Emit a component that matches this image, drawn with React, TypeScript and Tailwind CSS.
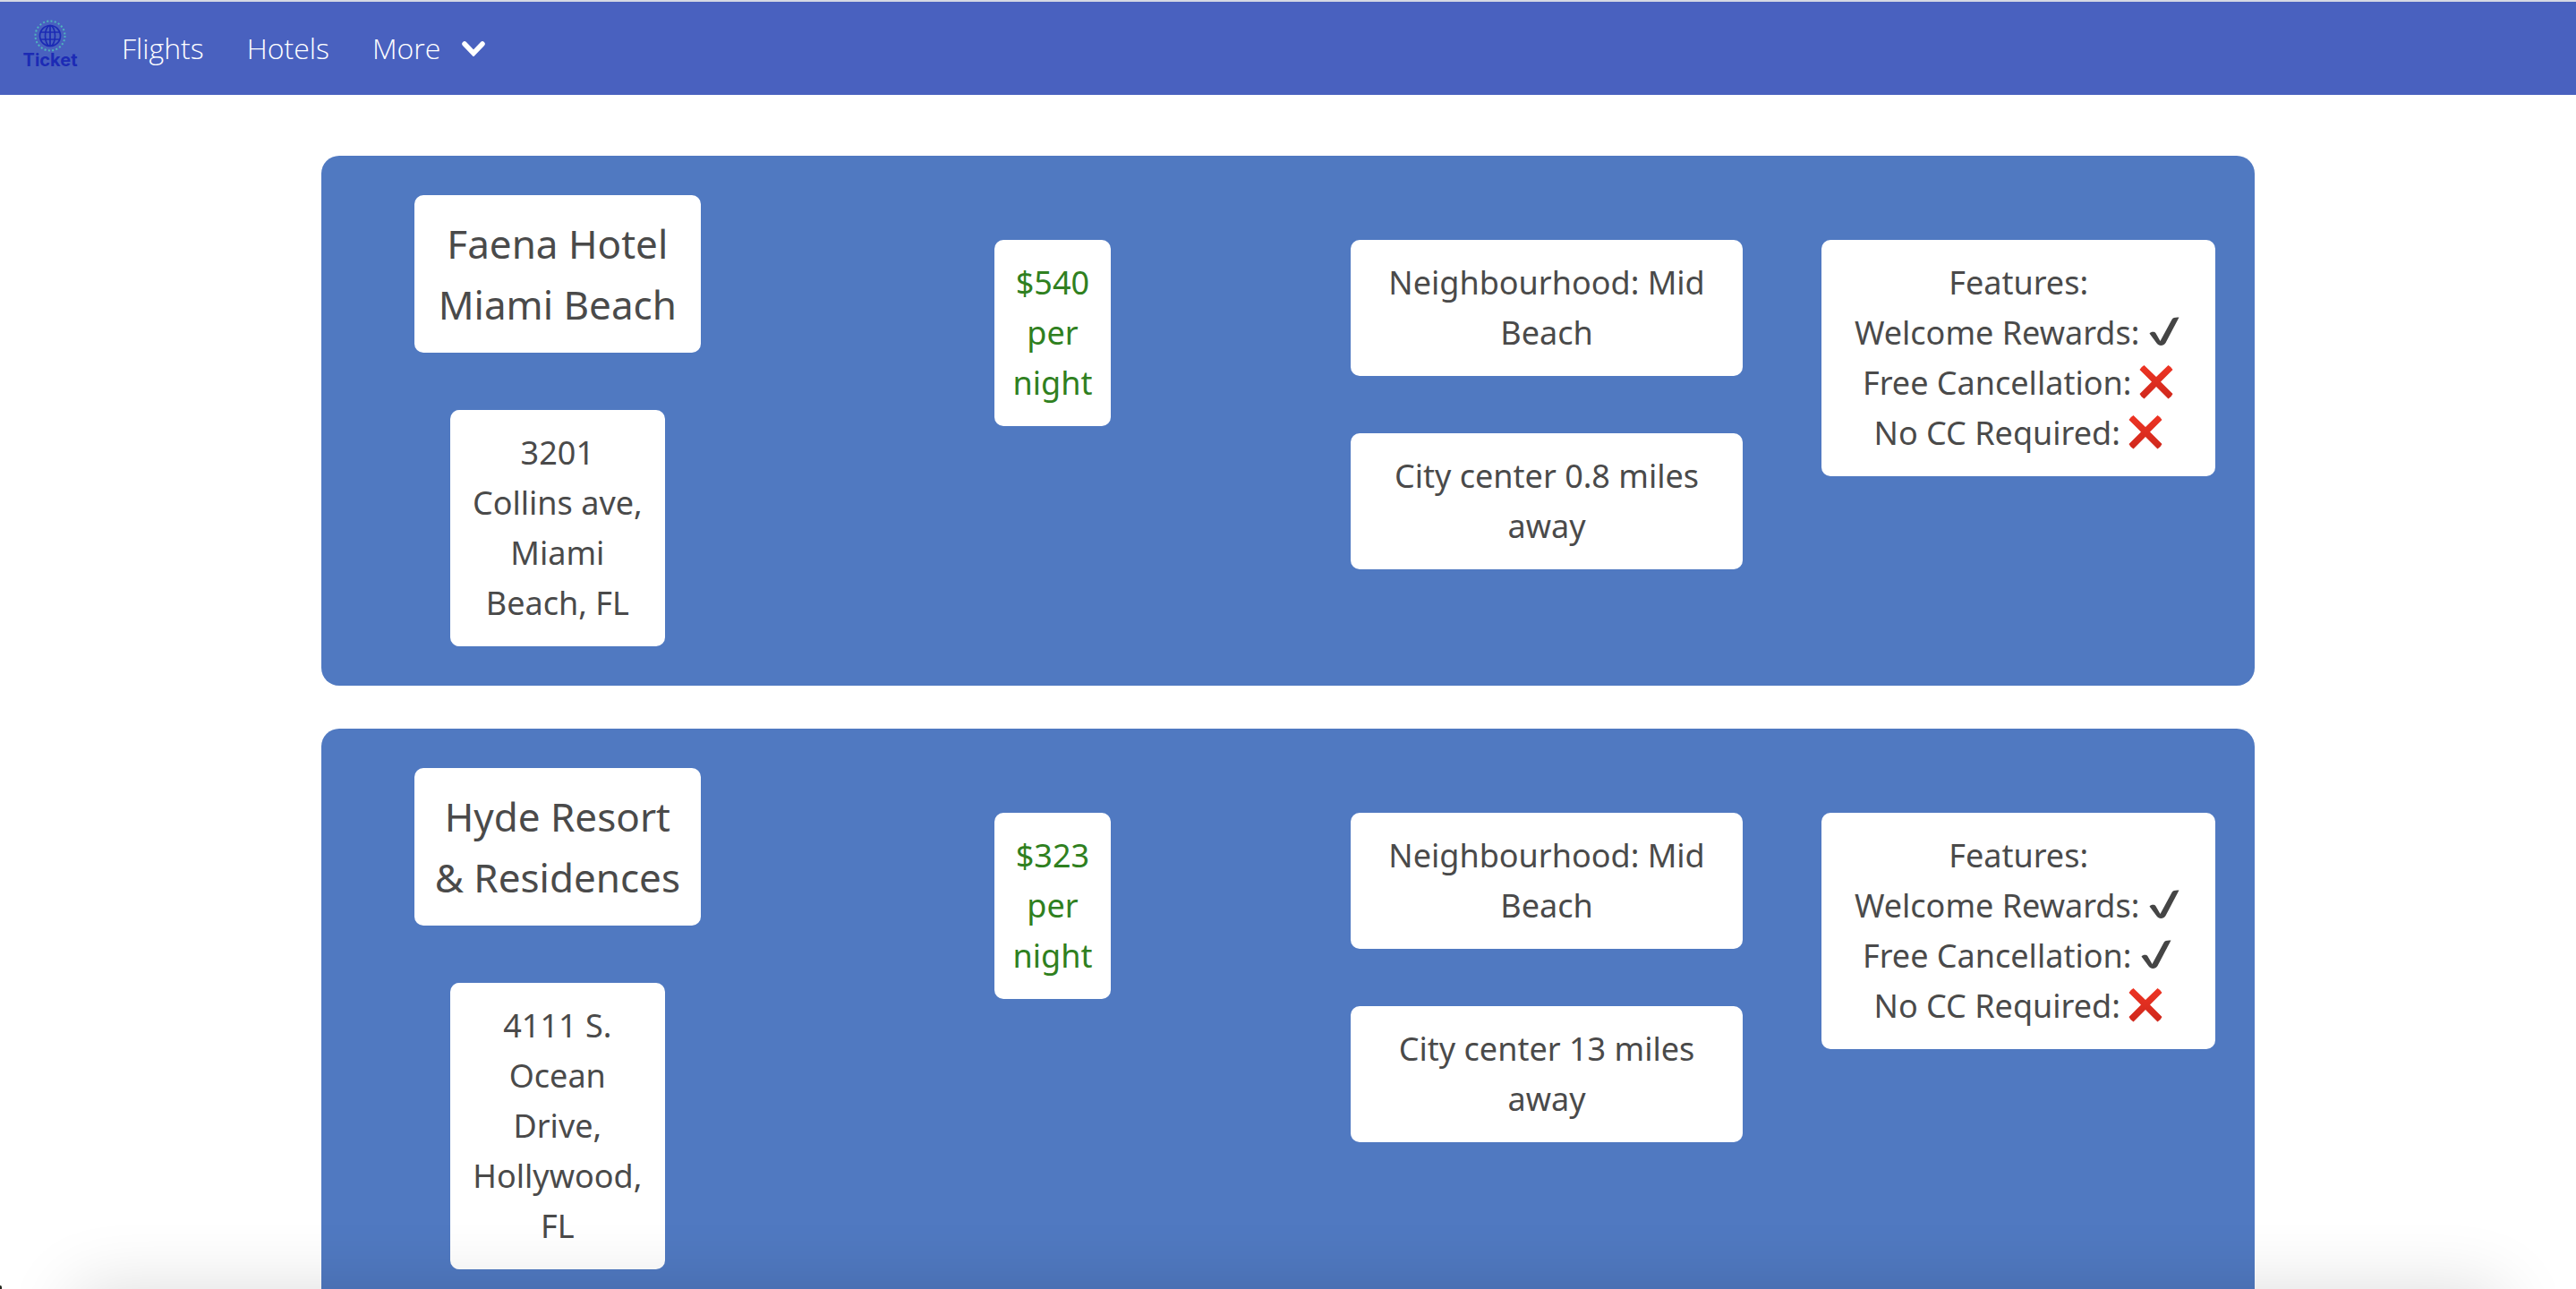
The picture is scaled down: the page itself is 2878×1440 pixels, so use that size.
import type { ReactNode } from "react";

type Feature = { label: string; available: boolean };

type Hotel = {
  name: string;
  address: string;
  price: number;
  neighbourhood: string;
  milesToCenter: string;
  features: Feature[];
};

const hotels: Hotel[] = [
  {
    name: "Faena Hotel Miami Beach",
    address: "3201 Collins ave, Miami Beach, FL",
    price: 540,
    neighbourhood: "Mid Beach",
    milesToCenter: "0.8",
    features: [
      { label: "Welcome Rewards:", available: true },
      { label: "Free Cancellation:", available: false },
      { label: "No CC Required:", available: false },
    ],
  },
  {
    name: "Hyde Resort & Residences",
    address: "4111 S. Ocean Drive, Hollywood, FL",
    price: 323,
    neighbourhood: "Mid Beach",
    milesToCenter: "13",
    features: [
      { label: "Welcome Rewards:", available: true },
      { label: "Free Cancellation:", available: true },
      { label: "No CC Required:", available: false },
    ],
  },
];

function Logo() {
  return (
    <a href="#" aria-label="Ticket home" className="flex w-16 flex-col items-center text-[#1c2bb5]">
      <svg viewBox="0 0 38 38" className="h-[38px] w-[38px]" fill="none" aria-hidden="true">
        <circle cx="19" cy="19" r="16.5" stroke="#4fb3bd" strokeWidth="2" strokeDasharray="2 2.32" />
        <g stroke="currentColor" strokeWidth="1.7">
          <circle cx="19" cy="19" r="11.5" />
          <ellipse cx="19" cy="19" rx="5.5" ry="11.5" />
          <path d="M19 7.500V30.500M8.500 15H29.500M8.500 23H29.500" />
        </g>
      </svg>
      <span className="font-['Inter',sans-serif] text-[20px] leading-4 font-bold">Ticket</span>
    </a>
  );
}

function NavBar() {
  return (
    <nav className="flex h-[106px] items-center border-t-2 border-[#d5d8e3] bg-[#4961bf] pl-6 font-['Open_Sans','Noto_Sans',sans-serif] text-[32px] font-light text-white">
      <div className="mb-3">
        <Logo />
      </div>
      <a href="#flights" className="ml-12">
        Flights
      </a>
      <a href="#hotels" className="ml-12">
        Hotels
      </a>
      <button type="button" className="ml-12 flex items-center gap-6 font-light">
        More
        <svg viewBox="0 0 26 17" className="h-[17px] w-[26px]" fill="none" aria-hidden="true">
          <path d="M3 3L13 13.500L23 3" stroke="currentColor" strokeWidth="5.500" strokeLinecap="round" />
        </svg>
      </button>
    </nav>
  );
}

function CheckMark() {
  return (
    <svg viewBox="0 0 40 40" className="size-10" role="img" aria-label="yes">
      <path
        d="M3.500 20.500C5 18.600 9 18 10.500 20.300L15.500 29L28.500 5C29.600 3 32.500 2.300 36.500 2.600L21.500 31C19.500 34.600 14 35.200 11.600 31.600Z"
        fill="#454545"
      />
    </svg>
  );
}

function CrossMark() {
  return (
    <svg viewBox="0 0 40 40" className="size-10" role="img" aria-label="no">
      <defs>
        <linearGradient id="cross" x1="0" y1="0" x2="0" y2="1">
          <stop offset="0" stopColor="#ee3424" />
          <stop offset="1" stopColor="#cf281c" />
        </linearGradient>
      </defs>
      <path
        d="M6.500 0L20 13L33.500 0Q37 2 38.500 5L25 18.500L38.500 32Q37 35.500 33.500 37.500L20 24L6.500 37.500Q3 35.500 1.500 32L15 18.500L1.500 5Q3 2 6.500 0Z"
        fill="url(#cross)"
      />
    </svg>
  );
}

function Tile({ className, children }: { className: string; children: ReactNode }) {
  return <div className={`rounded-[10px] bg-white py-5 text-center ${className}`}>{children}</div>;
}

function HotelCard({ hotel }: { hotel: Hotel }) {
  return (
    <article className="grid grid-cols-[264fr_289fr_263fr_264fr] items-start rounded-[20px] bg-[#5079c1] py-11">
      <div className="flex flex-col items-center gap-16">
        <Tile className="w-80 px-4">
          <h2 className="text-[44px] leading-[68px]">{hotel.name}</h2>
        </Tile>
        <Tile className="w-60 px-[22px]">
          <address className="not-italic">{hotel.address}</address>
        </Tile>
      </div>
      <div className="flex justify-center pt-[50px]">
        <Tile className="w-[130px] px-4 text-[#2f8020]">{`$${hotel.price} per night`}</Tile>
      </div>
      <div className="flex flex-col gap-16 px-11 pt-[50px]">
        <Tile className="px-8">{`Neighbourhood: ${hotel.neighbourhood}`}</Tile>
        <Tile className="px-8">{`City center ${hotel.milesToCenter} miles away`}</Tile>
      </div>
      <div className="px-11 pt-[50px]">
        <Tile className="px-4">
          <h3>Features:</h3>
          <ul>
            {hotel.features.map((feature) => (
              <li key={feature.label} className="flex items-center justify-center gap-2">
                {feature.label}
                {feature.available ? <CheckMark /> : <CrossMark />}
              </li>
            ))}
          </ul>
        </Tile>
      </div>
    </article>
  );
}

export default function App() {
  return (
    <div className="min-h-screen bg-white font-['Noto_Sans',sans-serif] text-[36px] leading-14 text-[#4a4a4a]">
      <NavBar />
      <main className="mx-auto mt-[68px] flex w-[calc(75%+2px)] flex-col gap-12 pb-12">
        {hotels.map((hotel) => (
          <HotelCard key={hotel.name} hotel={hotel} />
        ))}
      </main>
      <div className="pointer-events-none fixed inset-x-[84px] top-full h-24 shadow-[0_0_80px_rgba(0,0,0,0.14)]" />
      <div className="pointer-events-none fixed bottom-0 left-0 h-1 w-0.5 rounded-tr-full bg-[#22261c]" />
    </div>
  );
}
